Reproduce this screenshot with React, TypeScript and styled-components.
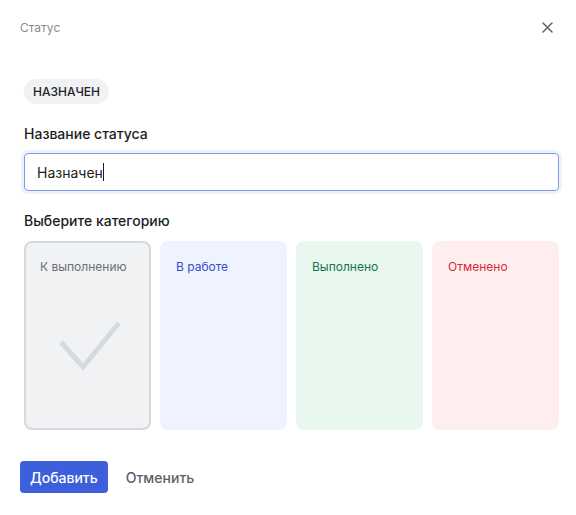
import styled, { createGlobalStyle } from "styled-components";

const GlobalStyle = createGlobalStyle`
  html, body {
    margin: 0;
    padding: 0;
    background: #ffffff;
    font-family: Inter, "Noto Sans", "Liberation Sans", sans-serif;
  }
`;

type Tone = "gray" | "blue" | "green" | "red";

const tones: Record<Tone, { bg: string; fg: string }> = {
  gray: { bg: "#f1f2f4", fg: "#6b6f76" },
  blue: { bg: "#eef3ff", fg: "#3a4cc4" },
  green: { bg: "#e8f8ee", fg: "#18744c" },
  red: { bg: "#ffeeee", fg: "#d52b3b" },
};

const Dialog = styled.div`
  width: 576px;
  height: 515px;
  box-sizing: border-box;
  display: flex;
  flex-direction: column;
`;

const Header = styled.div`
  display: flex;
  align-items: center;
  justify-content: space-between;
  padding: 18px 22px 0 20px;
  height: 18px;
`;

const Title = styled.span`
  font-size: 12px;
  color: #8a8d93;
`;

const CloseBtn = styled.button`
  border: none;
  background: none;
  padding: 0;
  width: 14px;
  height: 14px;
  display: flex;
  align-items: center;
  justify-content: center;
  cursor: pointer;
`;

const Body = styled.div`
  display: flex;
  flex-direction: column;
  align-items: flex-start;
  padding: 43px 17px 0 24px;
`;

const Badge = styled.span`
  height: 25px;
  line-height: 25px;
  padding: 0 9px;
  border-radius: 13px;
  background: #f1f2f4;
  color: #1f2328;
  font-size: 12px;
  font-weight: 500;
  text-transform: uppercase;
`;

const Label = styled.div<{ $top: number }>`
  margin-top: ${(p) => p.$top}px;
  font-size: 14px;
  line-height: 20px;
  font-weight: 500;
  color: #1b1d21;
`;

const Field = styled.div`
  margin-top: 9px;
  align-self: stretch;
  height: 38px;
  box-sizing: border-box;
  border: 1px solid #7f98ea;
  border-radius: 4px;
  box-shadow: 0 0 0 3px #eef2fd;
  display: flex;
  align-items: center;
  padding: 0 12px;
  font-size: 14px;
  color: #1b1d21;
`;

const Caret = styled.span`
  display: inline-block;
  width: 1px;
  height: 18px;
  background: #1b1d21;
`;

const Grid = styled.div`
  margin-top: 10px;
  align-self: stretch;
  display: grid;
  grid-template-columns: repeat(4, 127px);
  gap: 9px;
`;

const Card = styled.div<{ $tone: Tone; $selected?: boolean }>`
  height: 189px;
  box-sizing: border-box;
  border-radius: 8px;
  background: ${(p) => tones[p.$tone].bg};
  border: 2px solid ${(p) => (p.$selected ? "#d6d9de" : "transparent")};
  padding: 16px 14px 0;
  display: flex;
  flex-direction: column;
`;

const CardText = styled.span<{ $tone: Tone }>`
  font-size: 12px;
  line-height: 16px;
  color: ${(p) => tones[p.$tone].fg};
`;

const CheckArea = styled.div`
  flex: 1;
  display: flex;
  align-items: center;
  justify-content: center;
  padding: 0 0 12px 4px;
`;

const Footer = styled.div`
  display: flex;
  align-items: center;
  gap: 8px;
  padding: 31px 20px 0;
`;

const Button = styled.button<{ $primary?: boolean }>`
  height: 32px;
  padding: 0 10px;
  border: none;
  border-radius: 4px;
  font-family: inherit;
  font-size: 14px;
  font-weight: 500;
  background: ${(p) => (p.$primary ? "#3d5fdc" : "transparent")};
  color: ${(p) => (p.$primary ? "#ffffff" : "#5c6068")};
  cursor: pointer;
`;

const categories: { name: string; tone: Tone; selected?: boolean }[] = [
  { name: "К выполнению", tone: "gray", selected: true },
  { name: "В работе", tone: "blue" },
  { name: "Выполнено", tone: "green" },
  { name: "Отменено", tone: "red" },
];

function App() {
  return (
    <>
      <GlobalStyle />
      <Dialog>
        <Header>
          <Title>Статус</Title>
          <CloseBtn aria-label="Закрыть">
            <svg width="11" height="11" viewBox="0 0 11 11">
              <path d="M1 1 10 10M10 1 1 10" stroke="#5f6368" strokeWidth="1.5" strokeLinecap="round" />
            </svg>
          </CloseBtn>
        </Header>
        <Body>
          <Badge>Назначен</Badge>
          <Label $top={20}>Название статуса</Label>
          <Field>
            Назначен
            <Caret />
          </Field>
          <Label $top={20}>Выберите категорию</Label>
          <Grid>
            {categories.map((c) => (
              <Card key={c.name} $tone={c.tone} $selected={c.selected}>
                <CardText $tone={c.tone}>{c.name}</CardText>
                {c.selected && (
                  <CheckArea>
                    <svg width="64" height="52" viewBox="0 0 64 52">
                      <path d="M3 22 25 47 61 3" fill="none" stroke="#d6d9de" strokeWidth="5" strokeLinejoin="miter" />
                    </svg>
                  </CheckArea>
                )}
              </Card>
            ))}
          </Grid>
        </Body>
        <Footer>
          <Button $primary>Добавить</Button>
          <Button>Отменить</Button>
        </Footer>
      </Dialog>
    </>
  );
}

export default App;
